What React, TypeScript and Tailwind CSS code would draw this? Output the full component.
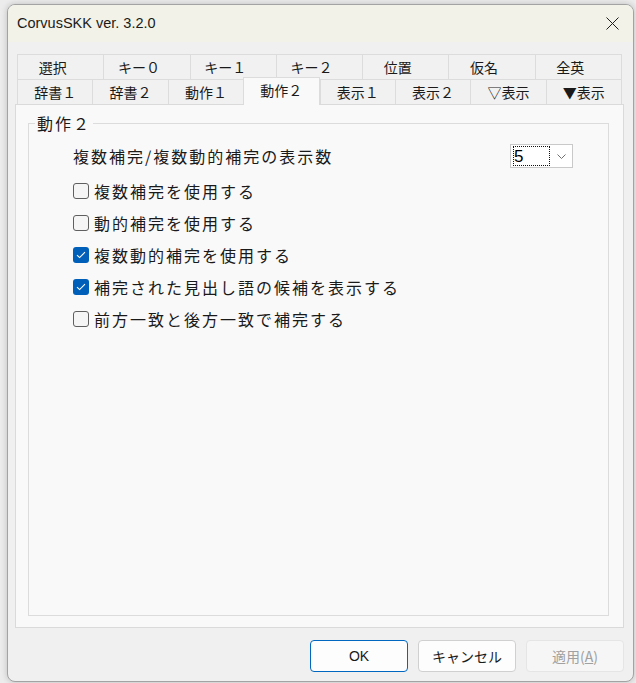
import React from "react";

const row1 = ["選択", "キー０", "キー１", "キー２", "位置", "仮名", "全英"];
const row2 = ["辞書１", "辞書２", "動作１", "動作２", "表示１", "表示２", "▽表示", "▼表示"];

function CheckBox({ checked }: { checked: boolean }) {
  if (checked) {
    return (
      <div className="w-[16px] h-[16px] rounded-[3px] bg-[#005fb8] flex items-center justify-center shrink-0">
        <svg width="10" height="8" viewBox="0 0 10 8">
          <path d="M1 4.2L3.6 6.6L9 1.2" fill="none" stroke="#ffffff" strokeWidth="1.1" />
        </svg>
      </div>
    );
  }
  return <div className="w-[16px] h-[16px] rounded-[3px] border border-[#5f5f5f] bg-[#f5f5f5] shrink-0" />;
}

const items: { label: string; checked: boolean }[] = [
  { label: "複数補完を使用する", checked: false },
  { label: "動的補完を使用する", checked: false },
  { label: "複数動的補完を使用する", checked: true },
  { label: "補完された見出し語の候補を表示する", checked: true },
  { label: "前方一致と後方一致で補完する", checked: false },
];

export default function App() {
  return (
    <div className="w-[636px] h-[683px] bg-[#ececec] overflow-hidden pl-[7px] pt-[4px]">
      <div className="w-[627px] h-[678px] rounded-[8px] border border-[#a3a3a3] bg-[#f0f0f0] flex flex-col overflow-hidden shadow-[0_0_6px_rgba(0,0,0,0.2)]">
        {/* title bar */}
        <div className="h-[37px] shrink-0 bg-[#f2f2e8] flex items-center justify-between pl-[9px] pr-[14px]">
          <span className="font-['Liberation_Sans',sans-serif] text-[14.5px] text-[#1b1b1b] pt-[1px]">
            CorvusSKK ver. 3.2.0
          </span>
          <svg width="13" height="13" viewBox="0 0 13 13">
            <path d="M0.5 0.5L12.5 12.5M12.5 0.5L0.5 12.5" stroke="#1f1f1f" strokeWidth="1" />
          </svg>
        </div>

        {/* body */}
        <div className="flex-1 flex flex-col pt-[12px] pl-[7px] pr-[9px] pb-[9px]">
          {/* tabs */}
          <div className="mx-[2px] flex flex-col font-['Noto_Sans_CJK_JP',sans-serif] text-[14px] text-[#1a1a1a]">
            <div className="flex h-[25px]">
              {row1.map((t, i) => (
                <div
                  key={t}
                  className={
                    "flex-1 flex items-center justify-center pr-[16px] border-t border-l border-[#dcdcdc] bg-[#f1f1f1] leading-none " +
                    (i === row1.length - 1 ? "border-r" : "")
                  }
                >
                  {t}
                </div>
              ))}
            </div>
            <div className="flex items-end h-[25px]">
              {row2.map((t, i) =>
                t === "動作２" ? (
                  <div
                    key={t}
                    className="flex-1 h-[28px] -mb-[1px] relative z-10 flex items-start pt-[5px] justify-center border-t border-l border-r border-[#dcdcdc] bg-[#f9f9f9] leading-none"
                  >
                    {t}
                  </div>
                ) : (
                  <div
                    key={t}
                    className={
                      "flex-1 h-[25px] flex items-center justify-center border-t border-l border-[#dcdcdc] bg-[#f1f1f1] leading-none " +
                      (i === row2.length - 1 ? "border-r" : "")
                    }
                  >
                    {t}
                  </div>
                )
              )}
            </div>
          </div>

          {/* panel */}
          <div className="h-[524px] border border-[#dadada] bg-[#f9f9f9] flex flex-col pt-[8px] pl-[12px] pr-[14px] pb-[11px]">
            <fieldset className="flex-1 border border-[#dcdcdc] p-0 m-0 min-w-0">
              <legend className="ml-[6px] px-[2px] font-['Noto_Sans_CJK_JP',sans-serif] text-[16px] leading-[20px] tracking-[2px] text-[#1a1a1a]">
                動作２
              </legend>
              <div className="pl-[44px] pr-[35px] pt-[11px] flex flex-col font-['Noto_Sans_CJK_JP',sans-serif] text-[16px] text-[#1a1a1a]">
                <div className="h-[24px] flex items-center justify-between">
                  <span className="tracking-[2px] leading-none">複数補完/複数動的補完の表示数</span>
                  <div className="w-[63px] h-[24px] border border-[#c9c9c9] bg-white flex items-center pl-[2px]">
                    <div className="w-[37px] h-[20px] border border-dotted border-[#111111] flex items-center">
                      <span className="font-['Liberation_Sans',sans-serif] text-[17px] leading-none text-black">5</span>
                    </div>
                    <div className="flex-1 flex items-center justify-center">
                      <svg width="9" height="5" viewBox="0 0 9 5">
                        <path d="M0.5 0.5L4.5 4.5L8.5 0.5" fill="none" stroke="#707070" strokeWidth="1" />
                      </svg>
                    </div>
                  </div>
                </div>
                <div className="mt-[7px] flex flex-col">
                  {items.map((it) => (
                    <div key={it.label} className="h-[32px] flex items-center gap-[5px]">
                      <CheckBox checked={it.checked} />
                      <span className="tracking-[2px] leading-none">{it.label}</span>
                    </div>
                  ))}
                </div>
              </div>
            </fieldset>
          </div>

          {/* buttons */}
          <div className="mt-[12px] h-[32px] flex justify-end gap-[10px]">
            <div className="w-[98px] h-[32px] rounded-[4px] border border-[#0067c0] bg-[#fdfdfd] flex items-center justify-center font-['Liberation_Sans',sans-serif] text-[14px] text-[#1a1a1a]">
              OK
            </div>
            <div className="w-[98px] h-[32px] rounded-[4px] border border-[#d0d0d0] bg-[#fdfdfd] flex items-center justify-center font-['Noto_Sans_CJK_JP',sans-serif] text-[14px] text-[#1a1a1a]">
              キャンセル
            </div>
            <div className="w-[98px] h-[32px] rounded-[4px] border border-[#e5e5e5] bg-[#f6f6f6] flex items-center justify-center font-['Noto_Sans_CJK_JP',sans-serif] text-[14px] text-[#a0a0a0]">
              適用(<span className="underline">A</span>)
            </div>
          </div>
        </div>
      </div>
    </div>
  );
}
